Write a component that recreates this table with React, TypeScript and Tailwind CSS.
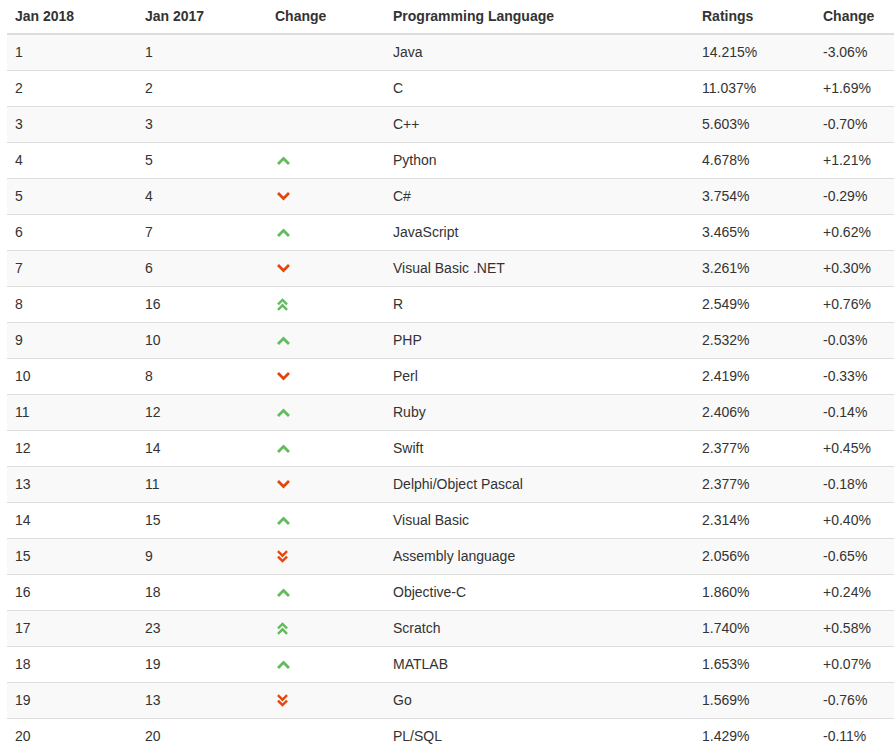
import React from 'react';

type Row = {
    now: number;
    prev: number;
    lang: string;
    rating: string;
    change: string;
};

const rows: Row[] = [
    { now: 1, prev: 1, lang: 'Java', rating: '14.215%', change: '-3.06%' },
    { now: 2, prev: 2, lang: 'C', rating: '11.037%', change: '+1.69%' },
    { now: 3, prev: 3, lang: 'C++', rating: '5.603%', change: '-0.70%' },
    { now: 4, prev: 5, lang: 'Python', rating: '4.678%', change: '+1.21%' },
    { now: 5, prev: 4, lang: 'C#', rating: '3.754%', change: '-0.29%' },
    { now: 6, prev: 7, lang: 'JavaScript', rating: '3.465%', change: '+0.62%' },
    { now: 7, prev: 6, lang: 'Visual Basic .NET', rating: '3.261%', change: '+0.30%' },
    { now: 8, prev: 16, lang: 'R', rating: '2.549%', change: '+0.76%' },
    { now: 9, prev: 10, lang: 'PHP', rating: '2.532%', change: '-0.03%' },
    { now: 10, prev: 8, lang: 'Perl', rating: '2.419%', change: '-0.33%' },
    { now: 11, prev: 12, lang: 'Ruby', rating: '2.406%', change: '-0.14%' },
    { now: 12, prev: 14, lang: 'Swift', rating: '2.377%', change: '+0.45%' },
    { now: 13, prev: 11, lang: 'Delphi/Object Pascal', rating: '2.377%', change: '-0.18%' },
    { now: 14, prev: 15, lang: 'Visual Basic', rating: '2.314%', change: '+0.40%' },
    { now: 15, prev: 9, lang: 'Assembly language', rating: '2.056%', change: '-0.65%' },
    { now: 16, prev: 18, lang: 'Objective-C', rating: '1.860%', change: '+0.24%' },
    { now: 17, prev: 23, lang: 'Scratch', rating: '1.740%', change: '+0.58%' },
    { now: 18, prev: 19, lang: 'MATLAB', rating: '1.653%', change: '+0.07%' },
    { now: 19, prev: 13, lang: 'Go', rating: '1.569%', change: '-0.76%' },
    { now: 20, prev: 20, lang: 'PL/SQL', rating: '1.429%', change: '-0.11%' },
];

const GREEN = '#62bb5d';
const RED = '#e2460f';

function Trend({ now, prev }: { now: number; prev: number }) {
    const diff = prev - now;
    if (diff === 0) return null;
    const up = diff > 0;
    const color = up ? GREEN : RED;
    const big = Math.abs(diff) >= 5;

    if (!big) {
        return (
            <svg width="13" height="9" viewBox="0 0 13 9" className="ml-[2px]">
                <path
                    d={up ? 'M2 7 L6.5 2.5 L11 7' : 'M2 2 L6.5 6.5 L11 2'}
                    fill="none"
                    stroke={color}
                    strokeWidth="2.8"
                    strokeLinecap="square"
                />
            </svg>
        );
    }
    return (
        <svg width="11" height="13" viewBox="0 0 11 13" className="ml-[2px]">
            <path
                d={up ? 'M1.8 5.6 L5.5 1.9 L9.2 5.6 M1.8 11 L5.5 7.3 L9.2 11' : 'M1.8 2 L5.5 5.7 L9.2 2 M1.8 7.4 L5.5 11.1 L9.2 7.4'}
                fill="none"
                stroke={color}
                strokeWidth="2.4"
                strokeLinecap="square"
            />
        </svg>
    );
}

const cols = 'grid grid-cols-[130px_130px_118px_309px_121px_1fr]';

export default function App() {
    return (
        <div className="min-h-screen bg-white pl-[7px] font-['Liberation_Sans',Arial,sans-serif] text-[14px] text-[#333]">
            {/* Header */}
            <div className={`${cols} h-[35px] items-center border-b-2 border-[#ddd] font-bold`}>
                <div className="px-2">Jan 2018</div>
                <div className="px-2">Jan 2017</div>
                <div className="px-2">Change</div>
                <div className="px-2">Programming Language</div>
                <div className="px-2">Ratings</div>
                <div className="px-2">Change</div>
            </div>

            {/* Rows */}
            {rows.map((r, i) => (
                <div
                    key={r.now}
                    className={`${cols} items-center ${i === 0 ? 'h-[35px]' : 'h-[36px] border-t border-[#ddd]'} ${i % 2 === 0 ? 'bg-[#f9f9f9]' : 'bg-white'}`}
                >
                    <div className="px-2">{r.now}</div>
                    <div className="px-2">{r.prev}</div>
                    <div className="flex items-center px-2">
                        <Trend now={r.now} prev={r.prev} />
                    </div>
                    <div className="px-2">{r.lang}</div>
                    <div className="px-2">{r.rating}</div>
                    <div className="px-2">{r.change}</div>
                </div>
            ))}
        </div>
    );
}
